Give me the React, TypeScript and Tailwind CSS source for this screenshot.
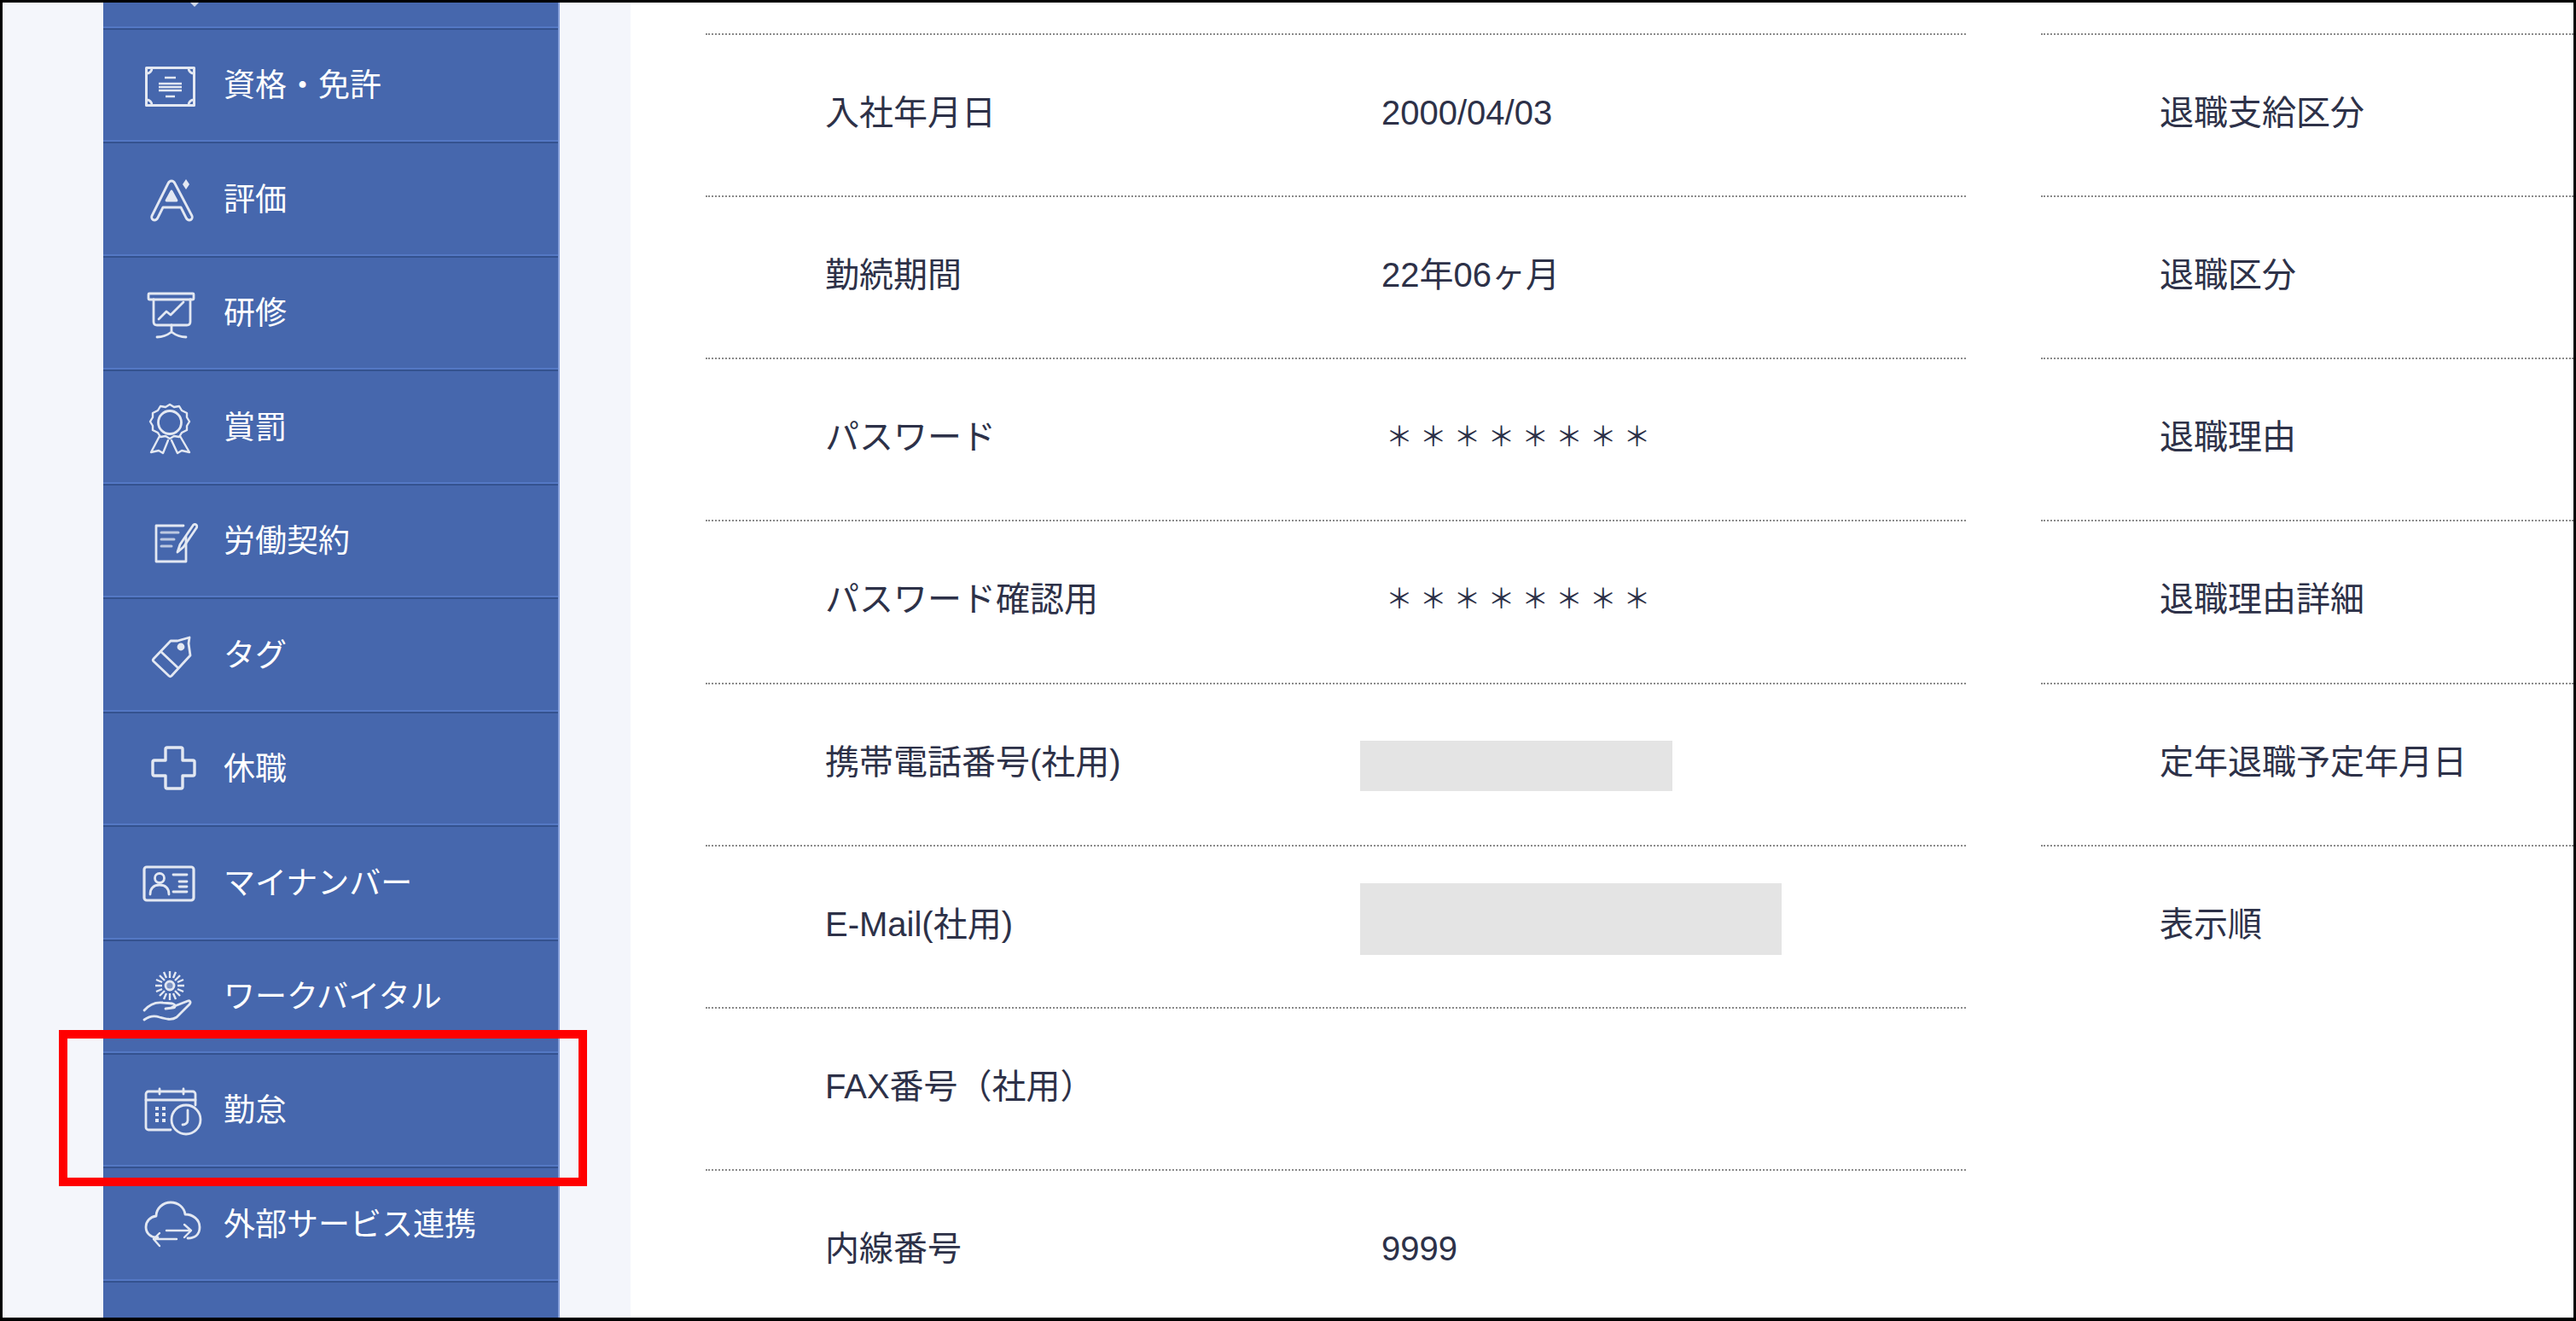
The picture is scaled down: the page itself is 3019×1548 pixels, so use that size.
const FONT = `"Liberation Sans", "Noto Sans CJK JP", sans-serif`;

type IconProps = { children: React.ReactNode };

function Icon({ children }: IconProps) {
  return (
    <svg
      viewBox="0 0 80 80"
      fill="none"
      stroke="#fff"
      strokeWidth="2.8"
      strokeLinecap="round"
      strokeLinejoin="round"
      className="h-[80px] w-[80px] shrink-0 opacity-85 blur-[0.5px]"
    >
      {children}
    </svg>
  );
}

const CertIcon = () => (
  <Icon>
    <rect x="11.5" y="19.5" width="56" height="44" strokeWidth="3" />
    <path d="M12 26a6 6 0 0 0 6-6M61 20a6 6 0 0 0 6 6M67 57a6 6 0 0 0-6 6M18 63a6 6 0 0 0-6-6" />
    <path d="M33 31h13M26 38h27M26 42h27M26 46h27M34 53h11" strokeWidth="2.4" strokeLinecap="butt" />
  </Icon>
);

const GradeIcon = () => (
  <Icon>
    <path d="M41 19c2 0 3 1 4 3l20 38c1 3-1 5-3 5s-3-1-4-3l-6-12H31l-6 12c-1 2-2 3-4 3s-4-2-3-5l19-38c1-2 2-3 4-3Z" />
    <path d="M41 31l6 11H35l6-11Z" fill="#fff" />
    <path d="M58 17l4 6-4 6-4-6 4-6Z" fill="#fff" stroke="none" />
  </Icon>
);

const TrainingIcon = () => (
  <Icon>
    <rect x="14" y="17" width="53" height="7" rx="1" />
    <path d="M20 24v26c0 2 1 4 4 4h35c3 0 4-2 4-4V24" />
    <path d="M26 47l9-9 5 4 15-15" />
    <path d="M41 54v8M24 68c8 0 13-3 17-6 4 3 9 6 17 6" />
  </Icon>
);

const AwardIcon = () => (
  <Icon>
    <path d="M39 14l5 3 6-1 3 5 6 3 0 5 3 5-3 5 0 5-6 3-3 5-6-1-5 3-5-3-6 1-3-5-6-3 0-5-3-5 3-5 0-5 6-3 3-5 6 1Z" strokeWidth="2.4" />
    <circle cx="39" cy="35" r="13.5" />
    <path d="M27 51l-10 19 9-2 5 3 6-15M51 51l11 19-9-2-5 3-7-15" strokeWidth="2.4" />
  </Icon>
);

const ContractIcon = () => (
  <Icon>
    <path d="M58 36v29H23V23h32" />
    <path d="M29 31h20M29 39h15M29 47h12" strokeWidth="3" opacity="0.75" />
    <path d="M48 54l3-9 15-22c1-2 3-2 4-1s1 3 0 4L55 48l-7 6Z" />
  </Icon>
);

const TagIcon = () => (
  <Icon>
    <path d="M48 24l14-4-1 7 2 14-22 24c-1 1-2 1-3 0L20 48c-1-1-1-2 0-3L40 24h8Z" />
    <path d="M29 37l19 18" />
    <circle cx="52" cy="31" r="3" fill="#fff" />
  </Icon>
);

const CrossIcon = () => (
  <Icon>
    <path
      d="M36 16h16a2 2 0 0 1 2 2v13h12a2 2 0 0 1 2 2v14a2 2 0 0 1-2 2H54v13a2 2 0 0 1-2 2H36a2 2 0 0 1-2-2V49H21a2 2 0 0 1-2-2V33a2 2 0 0 1 2-2h13V18a2 2 0 0 1 2-2Z"
      strokeWidth="3.4"
    />
  </Icon>
);

const IdCardIcon = () => (
  <Icon>
    <rect x="9" y="22" width="58" height="39" rx="3" strokeWidth="3.2" />
    <circle cx="27" cy="35" r="5.5" />
    <path d="M16 54c0-8 5-11 11-11s11 3 11 11" />
    <path d="M43 31h16M50 39h9M50 45h9M43 51h16" />
  </Icon>
);

const VitalIcon = () => (
  <Icon>
    <circle cx="39" cy="28" r="5" fill="#fff" fillOpacity="0.35" />
    <path
      d="M39 11v8M39 37v8M22 28h8M48 28h8M27 16l6 6M45 34l6 6M51 16l-6 6M33 34l-6 6M32 12l3 7M43 37l3 7M46 12l-3 7M35 37l-3 7M23 21l7 3M48 32l7 3M23 35l7-3M48 24l7-3"
      strokeWidth="2.4"
      strokeLinecap="butt"
    />
    <path d="M9 57c6-7 14-10 22-9l11 1c4 1 4 5 0 5l-8 1" />
    <path d="M42 53l18-7c3-1 4 2 2 4L47 65c-6 4-13 2-20 0-6-2-11-2-18 3" />
  </Icon>
);

const AttendanceIcon = () => (
  <Icon>
    <path d="M40 63H14a3 3 0 0 1-3-3V21a3 3 0 0 1 3-3h52a3 3 0 0 1 3 3v13" />
    <path d="M11 28h58M27 15v6M55 15v6" />
    <path d="M22 38h4M30 38h4M22 45h4M30 45h4M22 52h4M30 52h4" strokeWidth="4" strokeLinecap="butt" />
    <circle cx="58" cy="51" r="17" />
    <path d="M60 40v12c0 3-3 5-6 5" />
  </Icon>
);

const CloudIcon = () => (
  <Icon>
    <path d="M25 56c-8 1-14-5-14-12s5-12 12-13c0-9 8-16 17-16s16 6 17 14c9 0 17 6 17 15s-6 13-14 13" />
    <path d="M35 48h27M56 41l8 7-8 8M20 58h27M27 51l-7 7 7 8" strokeWidth="2.4" />
  </Icon>
);

const NAV_ITEMS = [
  { label: "資格・免許", icon: <CertIcon /> },
  { label: "評価", icon: <GradeIcon /> },
  { label: "研修", icon: <TrainingIcon /> },
  { label: "賞罰", icon: <AwardIcon /> },
  { label: "労働契約", icon: <ContractIcon /> },
  { label: "タグ", icon: <TagIcon /> },
  { label: "休職", icon: <CrossIcon /> },
  { label: "マイナンバー", icon: <IdCardIcon /> },
  { label: "ワークバイタル", icon: <VitalIcon /> },
  { label: "勤怠", icon: <AttendanceIcon /> },
  { label: "外部サービス連携", icon: <CloudIcon /> },
];

const LEFT_ROWS = [
  { label: "入社年月日", value: "2000/04/03" },
  { label: "勤続期間", value: "22年06ヶ月" },
  { label: "パスワード", secret: true },
  { label: "パスワード確認用", secret: true },
  { label: "携帯電話番号(社用)", mask: "phone" },
  { label: "E-Mail(社用)", mask: "mail" },
  { label: "FAX番号（社用）" },
  { label: "内線番号", value: "9999" },
];

const RIGHT_ROWS = ["退職支給区分", "退職区分", "退職理由", "退職理由詳細", "定年退職予定年月日", "表示順"];

function Sidebar() {
  return (
    <aside className="h-full w-[736px] shrink-0 bg-[#f4f6fb] pl-[118px]">
      <nav className="h-full w-[535px] border-r-2 border-[#86a0da] bg-[#4667ad]">
        {/* row scrolled almost out of view, only its icon tip shows */}
        <div className="flex h-[30px] items-start border-b-2 border-b-[#5478c4] pl-[102px]">
          <div className="h-0 w-0 border-x-[5px] border-t-[5px] border-x-transparent border-t-[#cfd8ea]" />
        </div>
        {NAV_ITEMS.map((item) => (
          <div
            key={item.label}
            className="flex h-[133.45px] items-center gap-[22px] border-t-2 border-b-2 border-t-[#34528f] border-b-[#5478c4] pl-[39px]"
          >
            {item.icon}
            <span className="pt-[3px] text-[37px] whitespace-nowrap text-white">{item.label}</span>
          </div>
        ))}
        <div className="h-[60px] border-t-2 border-t-[#34528f]" />
      </nav>
    </aside>
  );
}

function DetailRow({ label, children }: { label: string; children?: React.ReactNode }) {
  return (
    <div className="flex h-[190.15px] items-center border-t-2 border-dotted border-[#8a8a8a] pb-[6px]">
      {children !== undefined ? (
        <span className="w-[792px] shrink-0 pl-[140px] whitespace-nowrap">{label}</span>
      ) : (
        <span className="pl-[139px] whitespace-nowrap">{label}</span>
      )}
      {children}
    </div>
  );
}

export default function App() {
  return (
    <div
      className="relative flex h-[1548px] w-[3019px] overflow-hidden border-[3px] border-b-4 border-black bg-white"
      style={{ fontFamily: FONT }}
    >
      <Sidebar />
      <main className="flex min-w-0 flex-1 gap-[88px] pt-[36px] pl-[88px] text-[40px] text-[#2d3148]">
        <div className="w-[1477px] shrink-0">
          {LEFT_ROWS.map((row) => (
            <DetailRow key={row.label} label={row.label}>
              {row.mask === "phone" && <div className="mt-[10px] -ml-[25px] h-[59px] w-[366px] bg-[#e4e4e4]" />}
              {row.mask === "mail" && <div className="-ml-[25px] mb-[12px] h-[84px] w-[494px] bg-[#e4e4e4]" />}
              {row.secret && <span className="ml-[5px] text-[32px] tracking-[7.8px]">＊＊＊＊＊＊＊＊</span>}
              {row.value && <span>{row.value}</span>}
              {!row.mask && !row.value && !row.secret && <span />}
            </DetailRow>
          ))}
        </div>
        <div className="min-w-0 flex-1">
          {RIGHT_ROWS.map((label) => (
            <DetailRow key={label} label={label} />
          ))}
        </div>
      </main>
      {/* red highlight over 勤怠 */}
      <div className="absolute top-[1204px] left-[66px] h-[183px] w-[619px] border-[10px] border-[#ff0000]" />
    </div>
  );
}
